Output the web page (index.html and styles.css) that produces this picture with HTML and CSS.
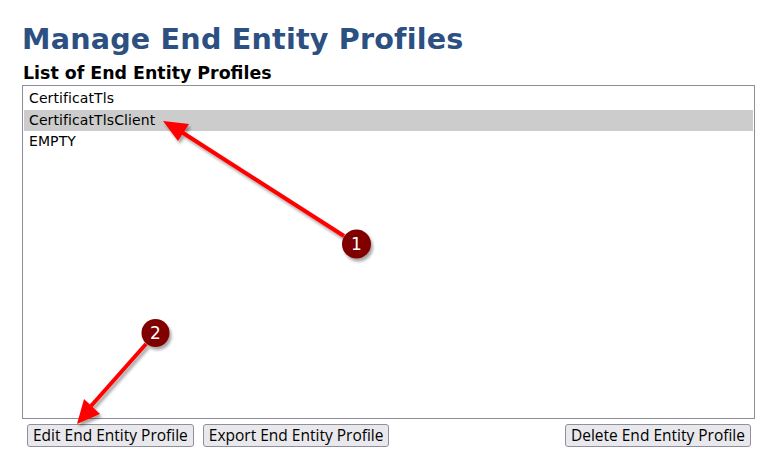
FILE: index.html
```html
<!DOCTYPE html>
<html>
<head>
<meta charset="utf-8">
<link rel="stylesheet" href="styles.css">
</head>
<body>
<div class="page">
  <h1 class="title">Manage End Entity Profiles</h1>
  <h2 class="subtitle">List of End Entity Profiles</h2>
  <div class="listbox">
    <div class="option">CertificatTls</div>
    <div class="option selected">CertificatTlsClient</div>
    <div class="option">EMPTY</div>
  </div>
  <div class="actions">
    <button class="btn">Edit End Entity Profile</button>
    <button class="btn">Export End Entity Profile</button>
    <button class="btn btn-right">Delete End Entity Profile</button>
  </div>
</div>
<svg class="annotations" width="781" height="461" viewBox="0 0 781 461">
  <defs>
    <filter id="sh" x="-20%" y="-20%" width="140%" height="140%">
      <feGaussianBlur in="SourceAlpha" stdDeviation="1.5"/>
      <feOffset dx="2" dy="3" result="b"/>
      <feComponentTransfer><feFuncA type="linear" slope="0.35"/></feComponentTransfer>
      <feMerge><feMergeNode/><feMergeNode in="SourceGraphic"/></feMerge>
    </filter>
  </defs>
  <g filter="url(#sh)">
    <line x1="344" y1="236" x2="180" y2="131" stroke="#ff0000" stroke-width="4"/>
    <polygon points="163,121 189,124 178,141" fill="#ff0000"/>
    <line x1="146" y1="344" x2="91" y2="406" stroke="#ff0000" stroke-width="4"/>
    <polygon points="77,424 84,399 100,414" fill="#ff0000"/>
  </g>
  <g filter="url(#sh)">
    <circle cx="356.5" cy="244" r="14.5" fill="#800000"/>
    <circle cx="155.5" cy="333" r="14" fill="#800000"/>
  </g>
  <text x="356.5" y="250" class="num">1</text>
  <text x="155.5" y="339" class="num">2</text>
</svg>
</body>
</html>
```
FILE: styles.css
```css
html, body {
  margin: 0;
  padding: 0;
  background: #ffffff;
}
.page {
  padding: 21px 26px 0 22px;
  font-family: "DejaVu Sans", Verdana, sans-serif;
}
.title {
  margin: 0;
  font-size: 28.6px;
  font-weight: bold;
  line-height: 36px;
  color: #2b5081;
  letter-spacing: 0.2px;
}
.subtitle {
  margin: 6px 0 0 1px;
  font-size: 17.4px;
  font-weight: bold;
  color: #000;
  line-height: 21px;
}
.listbox {
  box-sizing: border-box;
  height: 334px;
  border: 1px solid #8f8c9a;
  padding: 2px 1px;
  margin-top: 1px;
}
.option {
  font-family: "DejaVu Sans", Tahoma, sans-serif;
  font-size: 14px;
  letter-spacing: 0.1px;
  line-height: 21.5px;
  padding-left: 5px;
  color: #000;
}
.option.selected {
  background: #cccccc;
}
.actions {
  display: flex;
  gap: 9px;
  padding: 5px 4px 0 5px;
}
.btn {
  font-family: "Open Sans", "Noto Sans", sans-serif;
  font-size: 15.5px;
  line-height: 19px;
  padding: 1px 5px 1px 5px;
  height: 23px;
  background: #e9e9ed;
  border: 1px solid #8f8f9d;
  border-radius: 3px;
  color: #000;
}
.btn-right {
  margin-left: auto;
}
.annotations {
  position: absolute;
  left: 0;
  top: 0;
  pointer-events: none;
}
.num {
  font-family: "DejaVu Sans", sans-serif;
  font-size: 17px;
  fill: #ffffff;
  text-anchor: middle;
}
```
